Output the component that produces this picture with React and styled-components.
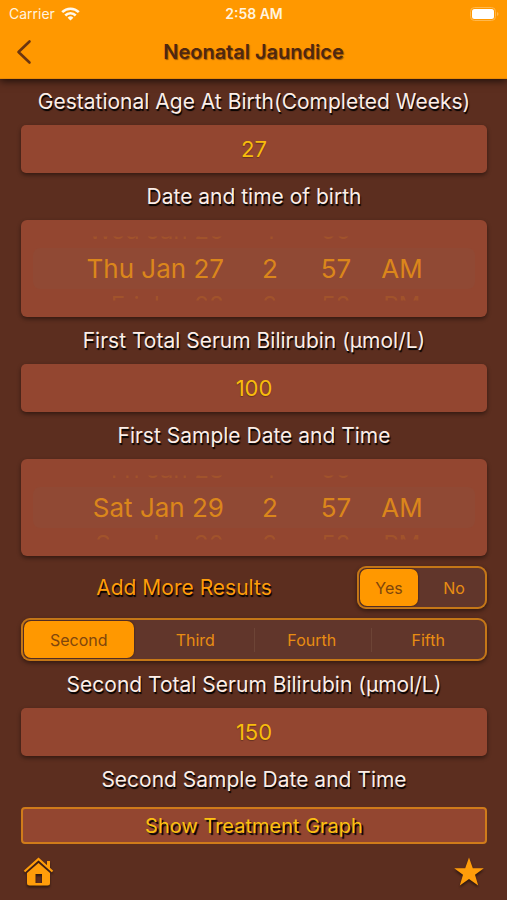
import React, { useState } from 'react'
import styled, { createGlobalStyle } from 'styled-components'

const GlobalStyle = createGlobalStyle`
  * {
    box-sizing: border-box;
  }
  body {
    margin: 0;
    background-color: #5c2e1f;
    font-family: Inter, "Liberation Sans", sans-serif;
  }
  button, input {
    font-family: inherit;
  }
`

const Page = styled.div`
  min-height: 100vh;
  display: flex;
  flex-direction: column;
  background-color: #5c2e1f;
`

const Header = styled.header`
  height: 78px;
  background-color: #ff9800;
  box-shadow: 0 1px 0 #e98a04, 0 3px 8px rgba(0, 0, 0, 0.7);
`

const StatusBar = styled.div`
  height: 27px;
  padding: 0 8px 0 9px;
  display: grid;
  grid-template-columns: 1fr auto 1fr;
  align-items: center;
  font-size: 14px;
  color: #fff3df;
`

const Carrier = styled.span`
  display: flex;
  align-items: center;
  gap: 6px;
`

const Clock = styled.span`
  font-weight: 600;
`

const BatteryIcon = styled.svg`
  justify-self: end;
`

const NavBar = styled.div`
  height: 50px;
  padding: 0 10px;
  display: grid;
  grid-template-columns: 40px 1fr 40px;
  align-items: center;
`

const IconButton = styled.button`
  padding: 0;
  border: none;
  background: none;
  display: flex;
  cursor: pointer;

  svg {
    filter: ${props => (props.$shadow ? 'drop-shadow(0 2px 1px rgba(0, 0, 0, 0.5))' : 'none')};
  }
`

const Title = styled.h1`
  margin: 0;
  text-align: center;
  font-size: 20px;
  font-weight: 600;
  color: #4f2810;
  text-shadow: 1px 1px 1px rgba(60, 20, 0, 0.5);
`

const Form = styled.main`
  flex: 1;
  padding: 0 20px 0 21px;
  display: flex;
  flex-direction: column;
`

const Label = styled.label`
  height: 47px;
  line-height: 48px;
  text-align: center;
  white-space: nowrap;
  font-size: 21px;
  color: #fbeee8;
  text-shadow: 1px 2px 1px #000;
`

const Field = styled.input`
  width: 100%;
  height: 48px;
  padding: 0;
  border: none;
  border-radius: 5px;
  background-color: #934630;
  box-shadow: 0 2px 4px rgba(0, 0, 0, 0.45);
  text-align: center;
  font-size: 22px;
  color: #f8bd0c;
  text-shadow: 0 1px 1px rgba(0, 0, 0, 0.3);
`

const Wheel = styled.div`
  height: 97px;
  padding: 0 12px;
  border-radius: 6px;
  background-color: #934630;
  box-shadow: 0 2px 4px rgba(0, 0, 0, 0.45);
`

const WheelRow = styled.div`
  height: 41px;
  display: grid;
  grid-template-columns: 162px 64px 64px 64px;
  column-gap: 2px;
  justify-content: center;
  align-items: center;
  border-radius: 7px;
  background-color: #904934;
  font-size: 26px;
  color: #db861b;
  text-align: center;
  white-space: nowrap;
`

/* neighbouring values fade out towards the rim of the wheel */
const WheelEdge = styled(WheelRow)`
  height: 28px;
  align-items: ${props => (props.$top ? 'start' : 'end')};
  background: none;
  border-radius: 0;
  font-size: 24px;
  line-height: 22px;
  opacity: 0.2;
  mask-image: ${props => (props.$top
    ? 'linear-gradient(to bottom, transparent 16px, #000 17px)'
    : 'linear-gradient(to bottom, #000 11px, transparent 12px)')};
`

const DayCell = styled.span`
  padding-right: 12px;
  text-align: right;
`

const MoreRow = styled.div`
  margin: 10px 0 9px;
  display: grid;
  grid-template-columns: 1fr 130px;
  column-gap: 10px;
  align-items: center;
`

const MoreText = styled.span`
  text-align: center;
  font-size: 21px;
  color: #ff9d0a;
  text-shadow: 1px 2px 1px #000;
`

const Segments = styled.div`
  height: 43px;
  display: flex;
  border-radius: 9px;
  background-color: #61362b;
  box-shadow: inset 0 0 0 2px #c57717, 0 2px 4px rgba(0, 0, 0, 0.45);
`

const Segment = styled.label`
  flex: 1;
  display: flex;
  align-items: center;
  position: relative;
  cursor: pointer;

  &::before {
    content: '';
    position: absolute;
    left: 0;
    width: 1px;
    height: 24px;
    background-color: ${props => (props.$divider ? '#6d4436' : 'transparent')};
  }

  input {
    position: absolute;
    opacity: 0;
  }

  span {
    flex: 1;
    margin: 3px 4px 3px 3px;
    height: 37px;
    line-height: 39px;
    border-radius: 7px;
    text-align: center;
    font-size: 16px;
    color: #e98d12;
  }

  input:checked + span {
    background-color: #ff9800;
    color: #80460c;
    box-shadow: 0 0 2px rgba(0, 0, 0, 0.6);
  }
`

const GraphButton = styled.button`
  width: 100%;
  height: 37px;
  margin-top: 4px;
  padding: 0;
  border: 2px solid #d07b1a;
  border-radius: 4px;
  background-color: #934630;
  font-size: 20px;
  color: #fcc010;
  text-shadow: 2px 2px 1px #000;
  cursor: pointer;
`

const Footer = styled.footer`
  height: 56px;
  padding: 0 22px;
  display: flex;
  justify-content: space-between;
  align-items: center;
`

const SegmentedControl = ({ name, label, options, value, onChange }) => {
  const active = options.indexOf(value)
  return (
    <Segments role="radiogroup" aria-label={label}>
      {options.map((option, i) => (
        <Segment key={option} $divider={i > active + 1}>
          <input
            type="radio"
            name={name}
            checked={value === option}
            onChange={() => onChange(option)}
          />
          <span>{option}</span>
        </Segment>
      ))}
    </Segments>
  )
}

const WheelCells = ({ values }) => (
  <>
    <DayCell>{values[0]}</DayCell>
    <span>{values[1]}</span>
    <span>{values[2]}</span>
    <span>{values[3]}</span>
  </>
)

const DateWheel = ({ labelledBy, before, current, after }) => (
  <Wheel role="group" aria-labelledby={labelledBy}>
    <WheelEdge $top aria-hidden="true"><WheelCells values={before} /></WheelEdge>
    <WheelRow><WheelCells values={current} /></WheelRow>
    <WheelEdge aria-hidden="true"><WheelCells values={after} /></WheelEdge>
  </Wheel>
)

const App = () => {
  const [age, setAge] = useState('27')
  const [first, setFirst] = useState('100')
  const [second, setSecond] = useState('150')
  const [more, setMore] = useState('Yes')
  const [sample, setSample] = useState('Second')

  return (
    <Page>
      <GlobalStyle />
      <Header>
        <StatusBar>
          <Carrier>
            Carrier
            <svg width="19" height="14" viewBox="0 0 19 14" fill="none" stroke="#fff8ea" strokeWidth="2.6">
              <path d="M1.2 5.2a11.8 11.8 0 0 1 16.6 0" />
              <path d="M4.3 8.5a7.3 7.3 0 0 1 10.4 0" />
              <path d="M9.5 13.6 6.6 10.7a4.1 4.1 0 0 1 5.8 0z" fill="#fff8ea" stroke="none" />
            </svg>
          </Carrier>
          <Clock>2:58 AM</Clock>
          <BatteryIcon width="29" height="14" viewBox="0 0 29 14">
            <rect x="0.5" y="0.5" width="25" height="13" rx="4" fill="none" stroke="#ffb84d" />
            <rect x="2" y="2" width="22" height="10" rx="2.5" fill="#fff" />
            <path d="M27 5v4q1.5-.6 1.5-2T27 5z" fill="#ffb84d" />
          </BatteryIcon>
        </StatusBar>
        <NavBar>
          <IconButton aria-label="Back">
            <svg width="24" height="26" viewBox="0 0 24 26" fill="none" stroke="#6b3610" strokeWidth="2.6" strokeLinecap="round" strokeLinejoin="round">
              <path d="M19.5 2.5 8.5 13l11 10.5" />
            </svg>
          </IconButton>
          <Title>Neonatal Jaundice</Title>
        </NavBar>
      </Header>

      <Form>
        <Label htmlFor="age">Gestational Age At Birth(Completed Weeks)</Label>
        <Field id="age" inputMode="numeric" value={age} onChange={e => setAge(e.target.value)} />

        <Label as="span" id="birth">Date and time of birth</Label>
        <DateWheel
          labelledBy="birth"
          before={['Wed Jan 26', '1', '56', '']}
          current={['Thu Jan 27', '2', '57', 'AM']}
          after={['Fri Jan 28', '3', '58', 'PM']}
        />

        <Label htmlFor="first">First Total Serum Bilirubin (µmol/L)</Label>
        <Field id="first" inputMode="numeric" value={first} onChange={e => setFirst(e.target.value)} />

        <Label as="span" id="firstDate">First Sample Date and Time</Label>
        <DateWheel
          labelledBy="firstDate"
          before={['Fri Jan 28', '1', '56', '']}
          current={['Sat Jan 29', '2', '57', 'AM']}
          after={['Sun Jan 30', '3', '58', 'PM']}
        />

        <MoreRow>
          <MoreText>Add More Results</MoreText>
          <SegmentedControl name="more" label="Add More Results" options={['Yes', 'No']} value={more} onChange={setMore} />
        </MoreRow>
        <SegmentedControl
          name="sample"
          label="Sample"
          options={['Second', 'Third', 'Fourth', 'Fifth']}
          value={sample}
          onChange={setSample}
        />

        <Label htmlFor="second">Second Total Serum Bilirubin (µmol/L)</Label>
        <Field id="second" inputMode="numeric" value={second} onChange={e => setSecond(e.target.value)} />

        <Label as="span">Second Sample Date and Time</Label>
        <GraphButton>Show Treatment Graph</GraphButton>
      </Form>

      <Footer>
        <IconButton $shadow aria-label="Home">
          <svg width="32" height="30" viewBox="0 0 32 30" fill="#ff9d0a">
            <path d="M2.5 14.5 16.5 2l14 12.5" fill="none" stroke="#ff9d0a" strokeWidth="2.2" />
            <path d="M25 4h3v8l-3-2.7z" />
            <path d="M16.5 6 28 16v10a2.5 2.5 0 0 1-2.5 2.5h-18A2.5 2.5 0 0 1 5 26V16zM13.5 17v9H20v-9z" fillRule="evenodd" />
          </svg>
        </IconButton>
        <IconButton $shadow aria-label="Favourite">
          <svg width="32" height="30" viewBox="0 0 32 30" fill="#ff9d0a">
            <path d="M16 .5 19.8 11.2h11L22 17.800l3.200 10.700L16 22l-9.200 6.500L10 17.800 1.200 11.200h11z" />
          </svg>
        </IconButton>
      </Footer>
    </Page>
  )
}

export default App
